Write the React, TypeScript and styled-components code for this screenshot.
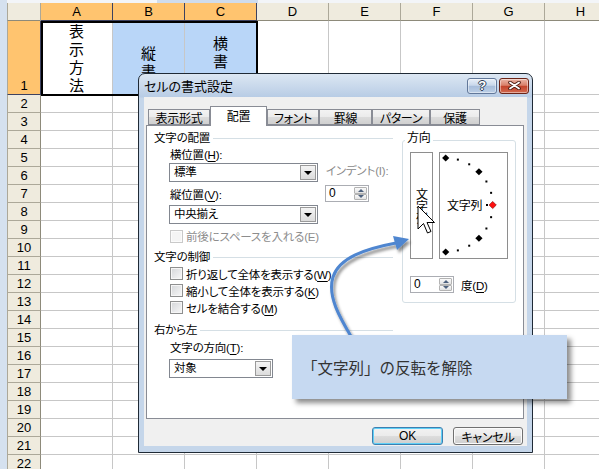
import React from 'react'
import styled, { createGlobalStyle } from 'styled-components'

const UI_FONT = '"Liberation Sans", "Noto Sans CJK JP", sans-serif'
const CJK_FONT = '"Noto Sans CJK JP", "Noto Sans", sans-serif'
const SHEET_FONT = '"Liberation Sans", Arial, sans-serif'

const GlobalStyle = createGlobalStyle`
    html, body {
        margin: 0;
        padding: 0;
        background: #fff;
    }
    * {
        box-sizing: border-box;
    }
`

const Screen = styled.div`
    position: relative;
    width: 599px;
    height: 469px;
    overflow: hidden;
    display: grid;
    grid-template-columns: 7px minmax(0, 1fr);
    grid-template-rows: 3px minmax(0, 1fr);
    background: #d5e1ef;
    font-family: ${UI_FONT};
`

const TopStrip = styled.div`
    grid-column: 2;
    grid-row: 1;
    background: linear-gradient(
        to right,
        #f3f5f8 0 150px,
        #cfdcec 150px 251px,
        #f3f5f8 251px
    );
`

/* ---------- spreadsheet ---------- */

const Sheet = styled.div`
    grid-column: 2;
    grid-row: 2;
    display: grid;
    grid-template-columns: 34px repeat(8, 72px);
    grid-template-rows: 18px 74px repeat(21, 18px);
    background: #fff;
    overflow: hidden;
`

type Place = { $row: number; $col: number }

const Corner = styled.div<Place>`
    grid-row: ${(p) => p.$row};
    grid-column: ${(p) => p.$col};
    background: #efebde;
    border-left: 1px solid #aca899;
    border-right: 1px solid #aca899;
    border-bottom: 1px solid #8d8a7a;
`

const ColHead = styled.div<Place & { $active?: boolean }>`
    grid-row: ${(p) => p.$row};
    grid-column: ${(p) => p.$col};
    display: flex;
    align-items: center;
    justify-content: center;
    font: 13px ${SHEET_FONT};
    color: #000;
    background: ${(p) => (p.$active ? '#ffc46f' : '#efebde')};
    border-right: 1px solid ${(p) => (p.$active ? '#3d4260' : '#aca899')};
    border-bottom: 1px solid ${(p) => (p.$active ? '#3d4260' : '#8d8a7a')};
`

const RowHead = styled.div<Place & { $active?: boolean }>`
    grid-row: ${(p) => p.$row};
    grid-column: ${(p) => p.$col};
    display: flex;
    align-items: flex-end;
    justify-content: center;
    font: 13px/17px ${SHEET_FONT};
    color: #000;
    background: ${(p) => (p.$active ? '#ffc46f' : '#efebde')};
    border-left: 1px solid #aca899;
    border-right: 1px solid ${(p) => (p.$active ? '#3d4260' : '#8d8a7a')};
    border-bottom: 1px solid ${(p) => (p.$active ? '#3d4260' : '#aca899')};
`

const Cell = styled.div<Place & { $fill?: string; $shift?: number }>`
    grid-row: ${(p) => p.$row};
    grid-column: ${(p) => p.$col};
    display: flex;
    flex-direction: column;
    align-items: center;
    justify-content: center;
    padding-top: ${(p) => p.$shift || 0}px;
    background: ${(p) => p.$fill || '#fff'};
    border-right: 1px solid #c7c7c7;
    border-bottom: 1px solid #c7c7c7;
    font: 15px/18px ${CJK_FONT};
    color: #000;
`

const Selection = styled.div`
    grid-area: 2 / 2 / 3 / 5;
    margin: 0 -1px -1px 0;
    border: 2px solid #000;
    pointer-events: none;
`

const COLS = ['A', 'B', 'C', 'D', 'E', 'F', 'G', 'H']

const ROW1: Record<string, { text: string; fill?: string; shift?: number }> = {
    A: { text: '表示方法' },
    B: { text: '縦書き', fill: '#b9d6f8', shift: 27 },
    C: { text: '横書き', fill: '#b9d6f8', shift: 7 },
}

const SheetView = () => {
    const items: React.ReactNode[] = [<Corner key="corner" $row={1} $col={1} />]
    COLS.forEach((c, i) =>
        items.push(
            <ColHead key={c} $row={1} $col={i + 2} $active={i < 3}>
                {c}
            </ColHead>
        )
    )
    for (let r = 1; r <= 22; r++) {
        items.push(
            <RowHead key={'h' + r} $row={r + 1} $col={1} $active={r === 1}>
                {r}
            </RowHead>
        )
        COLS.forEach((c, i) => {
            const v = r === 1 ? ROW1[c] : undefined
            items.push(
                <Cell key={c + r} $row={r + 1} $col={i + 2} $fill={v?.fill} $shift={v?.shift}>
                    {v && v.text.split('').map((ch, k) => <span key={k}>{ch}</span>)}
                </Cell>
            )
        })
    }
    items.push(<Selection key="sel" />)
    return <Sheet>{items}</Sheet>
}

/* ---------- dialog ---------- */

const Dialog = styled.div`
    position: absolute;
    left: 138px;
    top: 73px;
    width: 395px;
    height: 380px;
    display: flex;
    flex-direction: column;
    border: 1px solid #1f2a36;
    border-radius: 7px 7px 0 0;
    background: linear-gradient(to bottom, #dce7f3 0px, #b8cce5 23px, #c5d6ea 24px, #c5d6ea 100%);
    font-family: ${UI_FONT};
    font-size: 11.5px;
    letter-spacing: -0.2px;
    font-feature-settings: 'palt';
    color: #000;
`

const TitleBar = styled.div`
    flex: none;
    height: 23px;
    display: flex;
    align-items: center;
    padding: 0 3px 0 5px;
`

const Title = styled.div`
    flex: 1;
    font-size: 13px;
    letter-spacing: 0;
`

const CaptionButton = styled.div<{ $close?: boolean }>`
    width: 30px;
    height: 16px;
    margin-left: 2px;
    border-radius: 3px;
    border: 1px solid ${(p) => (p.$close ? '#6b2417' : '#62789a')};
    background: ${(p) =>
        p.$close
            ? 'linear-gradient(#ebb6a7, #d9806a 45%, #c4442b 52%, #d26a50)'
            : 'linear-gradient(#e8eff8, #c9d8eb 45%, #a8bedb 52%, #bccfe6)'};
    box-shadow: inset 0 0 0 1px rgba(255, 255, 255, 0.45);
    display: flex;
    align-items: center;
    justify-content: center;
    color: #fff;
    font: bold 13px ${SHEET_FONT};
    text-shadow: 1px 0 #2e3d55, -1px 0 #2e3d55, 0 1px #2e3d55, 0 -1px #2e3d55;
`

const DialogBody = styled.div`
    flex: 1;
    margin: 0 5px 6px 5px;
    padding: 9px 3px 0 2px;
    background: #f0f0f0;
    display: flex;
    flex-direction: column;
`

const TabRow = styled.div`
    display: flex;
    align-items: flex-end;
    height: 19px;
    padding-left: 2px;
`

const Tab = styled.div<{ $w: number; $active?: boolean }>`
    position: relative;
    z-index: ${(p) => (p.$active ? 1 : 0)};
    width: ${(p) => p.$w}px;
    height: ${(p) => (p.$active ? 20 : 16)}px;
    margin-bottom: ${(p) => (p.$active ? -1 : 0)}px;
    border: 1px solid #898c95;
    border-bottom: ${(p) => (p.$active ? 'none' : '1px solid #898c95')};
    background: ${(p) =>
        p.$active ? '#fff' : 'linear-gradient(#f3f3f3 0%, #ebebeb 50%, #dcdcdc 50%, #d0d0d0 100%)'};
    display: flex;
    align-items: center;
    justify-content: center;
    padding-bottom: ${(p) => (p.$active ? 2 : 0)}px;
    font-size: 12px;
    letter-spacing: -0.3px;
`

const Panel = styled.div`
    height: 294px;
    border: 1px solid #898c95;
    background: #fff;
    padding: 4px 0 0 7px;
    display: flex;
    gap: 9px;
`

const LeftCol = styled.div`
    width: 239px;
    display: flex;
    flex-direction: column;
`

const SectionHeader = styled.div<{ $mt?: number }>`
    height: 16px;
    margin-top: ${(p) => p.$mt || 0}px;
    display: flex;
    align-items: center;
    gap: 3px;
    line-height: 16px;
    &::after {
        content: '';
        flex: 1;
        height: 1px;
        background: #d5dfe5;
    }
`

const Mn = styled.span`
    text-decoration: underline;
    text-underline-offset: 2px;
`

const AlignGrid = styled.div`
    display: grid;
    grid-template-columns: 149px auto;
    grid-template-rows: 16px 19px 23px 19px;
    column-gap: 7px;
    margin: 1px 0 0 15px;
`

const FieldLabel = styled.div<{ $end?: boolean; $gray?: boolean; $mt?: number; $ml?: number }>`
    line-height: 16px;
    padding-left: 1px;
    align-self: ${(p) => (p.$end ? 'end' : 'auto')};
    margin-bottom: ${(p) => (p.$end ? 2 : 0)}px;
    margin-top: ${(p) => p.$mt || 0}px;
    margin-left: ${(p) => p.$ml || 0}px;
    color: ${(p) => (p.$gray ? '#8a8a8a' : '#000')};
    white-space: nowrap;
`

const Select = styled.div<{ $w: number; $mt?: number; $ml?: number }>`
    width: ${(p) => p.$w}px;
    height: 19px;
    margin-top: ${(p) => p.$mt || 0}px;
    margin-left: ${(p) => p.$ml || 0}px;
    border: 1px solid #828790;
    background: #fff;
    display: flex;
    align-items: center;
    padding: 0 1px 0 4px;
`

const SelectText = styled.span`
    flex: 1;
    line-height: 17px;
`

const SelectButton = styled.span`
    width: 16px;
    height: 15px;
    border: 1px solid;
    border-color: #eaeaea #555 #555 #eaeaea;
    outline: 1px solid #9a9a9a;
    outline-offset: -1px;
    background: linear-gradient(#f4f4f4, #dcdcdc);
    display: flex;
    align-items: center;
    justify-content: center;
    &::after {
        content: '';
        border-left: 4px solid transparent;
        border-right: 4px solid transparent;
        border-top: 4px solid #000;
    }
`

const Spin = styled.div<{ $w: number; $mt?: number }>`
    width: ${(p) => p.$w}px;
    height: 17px;
    align-self: start;
    margin-top: ${(p) => p.$mt || 0}px;
    border: 1px solid #abadb3;
    background: #fff;
    display: flex;
`

const SpinValue = styled.span`
    flex: 1;
    padding-left: 3px;
    font: 12px/15px ${SHEET_FONT};
`

const SpinButtons = styled.span`
    width: 15px;
    display: flex;
    flex-direction: column;
    padding: 1px;
`

const SpinArrow = styled.span<{ $up?: boolean }>`
    flex: 1;
    border: 1px solid #b3b3b3;
    border-radius: 1px;
    background: linear-gradient(#fafafa, #e2e2e2);
    display: flex;
    align-items: center;
    justify-content: center;
    &::after {
        content: '';
        border-left: 3px solid transparent;
        border-right: 3px solid transparent;
        ${(p) => (p.$up ? 'border-bottom' : 'border-top')}: 3px solid #4c607d;
    }
`

const CheckRow = styled.div<{ $disabled?: boolean; $mt?: number; $h?: number }>`
    display: flex;
    align-items: center;
    gap: 3px;
    height: ${(p) => p.$h || 17}px;
    margin: ${(p) => p.$mt || 0}px 0 0 16px;
    color: ${(p) => (p.$disabled ? '#8d8d8d' : '#000')};
    white-space: nowrap;
`

const CheckBox = styled.span<{ $disabled?: boolean }>`
    width: 13px;
    height: 13px;
    flex: none;
    border: 1px solid ${(p) => (p.$disabled ? '#c9c9c9' : '#8e8f8f')};
    background: ${(p) => (p.$disabled ? '#f4f4f4' : 'linear-gradient(135deg, #d4d6d9, #f8f8f8)')};
    box-shadow: inset 0 0 0 1px ${(p) => (p.$disabled ? '#fbfbfb' : '#f6f6f6')};
`

const OrientGroup = styled.fieldset`
    width: 114px;
    height: 173px;
    margin: 0;
    padding: 0 7px;
    min-inline-size: 0;
    border: 1px solid #d5dfe5;
    border-radius: 3px;
`

const GroupLegend = styled.legend`
    margin-left: -5px;
    padding: 0 2px 4px;
    line-height: 16px;
    font-size: 12px;
`

const OrientRow = styled.div`
    display: flex;
    gap: 6px;
    margin-top: 2px;
`

const VerticalBox = styled.div`
    width: 23px;
    height: 107px;
    border: 1px solid #8e8e8e;
    display: flex;
    align-items: center;
    justify-content: center;
`

const VerticalText = styled.span`
    writing-mode: vertical-rl;
    font-family: ${CJK_FONT};
    font-feature-settings: normal;
    letter-spacing: 0;
    font-size: 12px;
    line-height: 12px;
`

const DialBox = styled.div`
    width: 69px;
    height: 107px;
    border: 1px solid #8e8e8e;
`

const DegreeRow = styled.div`
    display: flex;
    align-items: center;
    gap: 7px;
    margin-top: 17px;
`

const ButtonRow = styled.div`
    display: flex;
    justify-content: flex-end;
    gap: 10px;
    margin: 8px 1px 0 0;
`

const PushButton = styled.div<{ $w: number; $default?: boolean }>`
    width: ${(p) => p.$w}px;
    height: 18px;
    border: 1px solid ${(p) => (p.$default ? '#3c7fb1' : '#707070')};
    border-radius: 3px;
    background: linear-gradient(#f2f2f2 0%, #ebebeb 50%, #dddddd 50%, #cfcfcf 100%);
    box-shadow: inset 0 0 0 1px ${(p) => (p.$default ? '#5fd0f7' : '#fbfbfb')};
    display: flex;
    align-items: center;
    justify-content: center;
    font-size: 12px;
`

/* ---------- annotation ---------- */

const Callout = styled.div`
    position: absolute;
    left: 292px;
    top: 335px;
    width: 275px;
    height: 64px;
    background: #c6d9f1;
    box-shadow: 4px 4px 5px rgba(0, 0, 0, 0.45);
    display: flex;
    align-items: center;
    padding-left: 10px;
    font: 15.5px ${CJK_FONT};
    color: #333;
`

const Overlay = styled.svg`
    position: absolute;
    left: 0;
    top: 0;
    pointer-events: none;
`

const Cursor = styled.svg`
    position: absolute;
    left: 417px;
    top: 205px;
    pointer-events: none;
`

const Dial = () => {
    const cx = 5.7
    const cy = 52
    const r = 47
    const marks: React.ReactNode[] = []
    for (let a = -90; a <= 90; a += 15) {
        const rad = (a * Math.PI) / 180
        const x = cx + r * Math.cos(rad)
        const y = cy + r * Math.sin(rad)
        if (a % 45 === 0) {
            const s = 3.6
            marks.push(
                <polygon
                    key={a}
                    points={`${x},${y - s} ${x + s},${y} ${x},${y + s} ${x - s},${y}`}
                    fill={a === 0 ? '#ff1010' : '#000'}
                    stroke={a === 0 ? '#7a0000' : 'none'}
                    strokeWidth={0.6}
                />
            )
        } else {
            marks.push(<rect key={a} x={x - 1} y={y - 1} width={2} height={2} fill="#000" />)
        }
    }
    return (
        <svg width={67} height={105}>
            {marks}
            <rect x={46} y={51} width={2} height={2} fill="#000" />
            <text x={7} y={56.5} fontSize={12} fontFamily='"Noto Sans CJK JP", sans-serif' fill="#000">
                文字列
            </text>
        </svg>
    )
}

const FormatDialog = () => (
    <Dialog>
        <TitleBar>
            <Title>セルの書式設定</Title>
            <CaptionButton>?</CaptionButton>
            <CaptionButton $close>
                <svg width={13} height={9} viewBox="0 0 13 9">
                    <path d="M2 1.5 L11 7.5 M11 1.5 L2 7.5" stroke="#4a1a10" strokeWidth={3.6} strokeLinecap="round" />
                    <path d="M2 1.5 L11 7.5 M11 1.5 L2 7.5" stroke="#fff" strokeWidth={1.8} strokeLinecap="round" />
                </svg>
            </CaptionButton>
        </TitleBar>
        <DialogBody>
            <TabRow>
                <Tab $w={62}>表示形式</Tab>
                <Tab $w={57} $active>
                    配置
                </Tab>
                <Tab $w={52}>フォント</Tab>
                <Tab $w={53}>罫線</Tab>
                <Tab $w={58}>パターン</Tab>
                <Tab $w={50}>保護</Tab>
            </TabRow>
            <Panel>
                <LeftCol>
                    <SectionHeader>文字の配置</SectionHeader>
                    <AlignGrid>
                        <FieldLabel>
                            横位置(<Mn>H</Mn>):
                        </FieldLabel>
                        <span />
                        <Select $w={149}>
                            <SelectText>標準</SelectText>
                            <SelectButton />
                        </Select>
                        <FieldLabel $gray>インデント(I):</FieldLabel>
                        <FieldLabel $end>
                            縦位置(<Mn>V</Mn>):
                        </FieldLabel>
                        <Spin $w={44} $mt={3}>
                            <SpinValue>0</SpinValue>
                            <SpinButtons>
                                <SpinArrow $up />
                                <SpinArrow />
                            </SpinButtons>
                        </Spin>
                        <Select $w={149}>
                            <SelectText>中央揃え</SelectText>
                            <SelectButton />
                        </Select>
                        <span />
                    </AlignGrid>
                    <CheckRow $disabled $mt={4} $h={16}>
                        <CheckBox $disabled />
                        <span>前後にスペースを入れる(E)</span>
                    </CheckRow>
                    <SectionHeader $mt={5}>文字の制御</SectionHeader>
                    <CheckRow>
                        <CheckBox />
                        <span>
                            折り返して全体を表示する(<Mn>W</Mn>)
                        </span>
                    </CheckRow>
                    <CheckRow>
                        <CheckBox />
                        <span>
                            縮小して全体を表示する(<Mn>K</Mn>)
                        </span>
                    </CheckRow>
                    <CheckRow>
                        <CheckBox />
                        <span>
                            セルを結合する(<Mn>M</Mn>)
                        </span>
                    </CheckRow>
                    <SectionHeader $mt={6}>右から左</SectionHeader>
                    <FieldLabel $mt={2} $ml={15}>
                        文字の方向(<Mn>T</Mn>):
                    </FieldLabel>
                    <Select $w={104} $mt={3} $ml={15}>
                        <SelectText>対象</SelectText>
                        <SelectButton />
                    </Select>
                </LeftCol>
                <OrientGroup>
                    <GroupLegend>方向</GroupLegend>
                    <OrientRow>
                        <VerticalBox>
                            <VerticalText>文字列</VerticalText>
                        </VerticalBox>
                        <DialBox>
                            <Dial />
                        </DialBox>
                    </OrientRow>
                    <DegreeRow>
                        <Spin $w={44}>
                            <SpinValue>0</SpinValue>
                            <SpinButtons>
                                <SpinArrow $up />
                                <SpinArrow />
                            </SpinButtons>
                        </Spin>
                        <span>
                            度(<Mn>D</Mn>)
                        </span>
                    </DegreeRow>
                </OrientGroup>
            </Panel>
            <ButtonRow>
                <PushButton $w={71} $default>
                    OK
                </PushButton>
                <PushButton $w={70}>キャンセル</PushButton>
            </ButtonRow>
        </DialogBody>
    </Dialog>
)

export default function App() {
    return (
        <>
            <GlobalStyle />
            <Screen>
                <TopStrip />
                <SheetView />
                <FormatDialog />
                <Overlay width={599} height={469}>
                    <defs>
                        <filter id="arrowShadow" x="-30%" y="-30%" width="160%" height="160%">
                            <feDropShadow dx="2" dy="3" stdDeviation="1.5" floodColor="#000" floodOpacity="0.45" />
                        </filter>
                    </defs>
                    <g filter="url(#arrowShadow)">
                        <path
                            d="M352 338 C340 318 327 296 333 277 C339 258 364 249 396 243"
                            fill="none"
                            stroke="#4f86d0"
                            strokeWidth={3}
                            strokeLinecap="round"
                        />
                        <polygon points="409,239 397,250 393,236" fill="#4f86d0" />
                    </g>
                </Overlay>
                <Callout>「文字列」の反転を解除</Callout>
                <Cursor width={20} height={30}>
                    <path
                        d="M1 1 L1 24 L6.5 18.5 L10.5 28 L14 26.5 L10 17.5 L17.5 17.5 Z"
                        fill="#fff"
                        stroke="#000"
                        strokeWidth={1}
                        strokeLinejoin="miter"
                    />
                </Cursor>
            </Screen>
        </>
    )
}
